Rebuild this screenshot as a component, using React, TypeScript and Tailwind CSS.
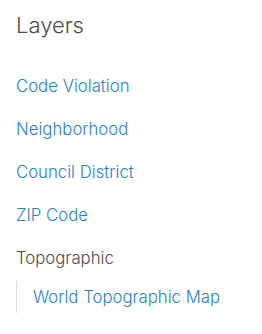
const layers = ['Code Violation', 'Neighborhood', 'Council District', 'ZIP Code'];

export default function App() {
  return (
    <div className="w-[262px] h-[334px] bg-white px-4 pt-[11px] font-['Inter',sans-serif] font-light">
      <h2 className="text-[22px] leading-[28px] text-[#4c4c4c]">Layers</h2>
      <ul className="mt-[38px] flex flex-col">
        {layers.map((name) => (
          <li key={name} className="h-[43px] text-[16.75px] leading-[18px] text-[#2a7fca]">
            {name}
          </li>
        ))}
        <li className="text-[16.75px] leading-[18px] text-[#4c4c4c]">
          Topographic
          <div className="mt-[14px] border-l border-[#dcdcdc] pl-4 py-[7px] text-[#2a7fca]">
            World Topographic Map
          </div>
        </li>
      </ul>
    </div>
  );
}
